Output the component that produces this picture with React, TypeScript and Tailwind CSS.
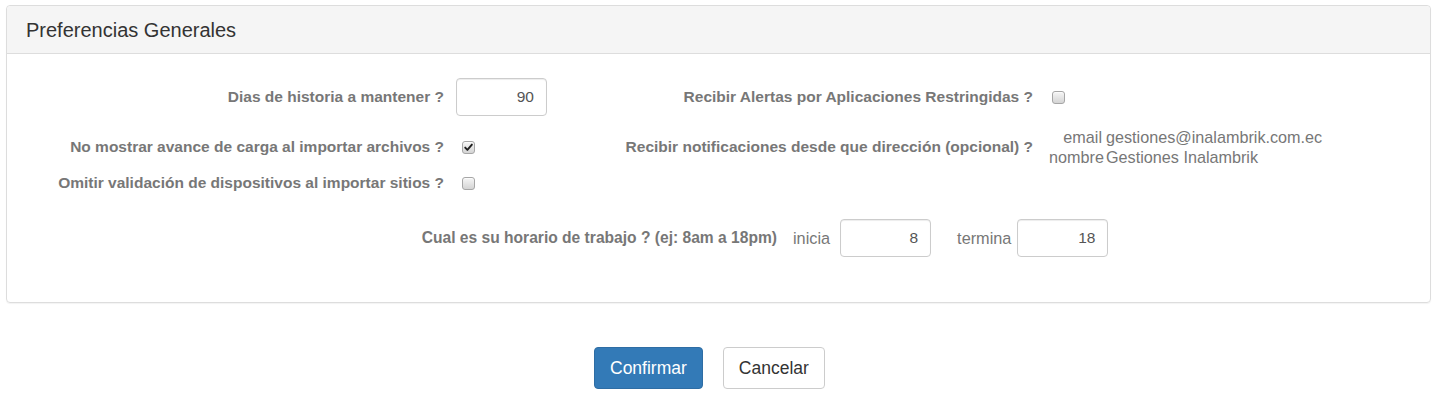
import { ReactElement } from "react"

function Checkbox({ checked = false }: { checked?: boolean }): ReactElement {
  return (
    <span className="inline-flex items-center justify-center w-[13px] h-[13px] rounded-[3px] border border-[#a6a6a6] bg-linear-to-b from-[#f6f6f6] to-[#d4d4d4] shadow-[inset_0_1px_0_rgba(255,255,255,0.6)]">
      {checked && (
        <svg width="11" height="11" viewBox="0 0 11 11">
          <path d="M2.2 5.6 L4.4 7.9 L8.9 2.6" fill="none" stroke="#1f1f1f" strokeWidth="1.9" strokeLinecap="round" strokeLinejoin="round" />
        </svg>
      )}
    </span>
  )
}

function NumberBox({ value }: { value: string }): ReactElement {
  return (
    <div className="flex items-center justify-end w-[91px] h-[38px] px-[12px] border border-[#ccc] rounded-[4px] shadow-[inset_0_1px_1px_rgba(0,0,0,0.075)] text-[15.5px] font-normal text-[#555]">
      {value}
    </div>
  )
}

export default function App(): ReactElement {
  return (
    <div className="min-h-screen bg-white pt-[5px] pl-[6px] pr-[11px] font-['Liberation_Sans',Arial,sans-serif]">
      <div className="border border-[#ddd] rounded-[4px] shadow-[0_1px_1px_rgba(0,0,0,0.05)]">
        <div className="flex items-center h-[48px] px-[19px] bg-[#f5f5f5] border-b border-[#ddd] rounded-t-[4px] text-[20px] text-[#333]">
          Preferencias Generales
        </div>

        <div className="pt-[24px] pb-[45px]">
          <div className="flex">
            {/* left column */}
            <div className="w-[593px] flex flex-col text-[15.5px] font-bold text-[#777] whitespace-nowrap">
              <div className="flex items-center h-[38px]">
                <div className="w-[437px] text-right">Dias de historia a mantener ?</div>
                <div className="ml-[12px]">
                  <NumberBox value="90" />
                </div>
              </div>
              <div className="flex items-center h-[20px] mt-[21px]">
                <div className="w-[437px] text-right">No mostrar avance de carga al importar archivos ?</div>
                <div className="ml-[18px] flex">
                  <Checkbox checked />
                </div>
              </div>
              <div className="flex items-center h-[20px] mt-[16px]">
                <div className="w-[437px] text-right">Omitir validación de dispositivos al importar sitios ?</div>
                <div className="ml-[18px] flex">
                  <Checkbox />
                </div>
              </div>
            </div>

            {/* right column */}
            <div className="flex-1 flex flex-col text-[15.5px] font-bold text-[#777] whitespace-nowrap">
              <div className="flex items-center h-[38px]">
                <div className="w-[433px] text-right">Recibir Alertas por Aplicaciones Restringidas ?</div>
                <div className="ml-[19px] flex">
                  <Checkbox />
                </div>
              </div>
              <div className="flex items-center h-[40px] mt-[11px]">
                <div className="w-[433px] text-right">Recibir notificaciones desde que dirección (opcional) ?</div>
                <div className="ml-[16px] grid grid-cols-[53px_auto] gap-x-[4px] text-[16.2px] leading-[20px] font-normal text-[#777]">
                  <span className="text-right">email</span>
                  <span>gestiones@inalambrik.com.ec</span>
                  <span className="text-right">nombre</span>
                  <span>Gestiones Inalambrik</span>
                </div>
              </div>
            </div>
          </div>

          <div className="flex items-center h-[38px] mt-[26px] text-[#777] whitespace-nowrap">
            <div className="w-[770px] text-right text-[15.6px] font-bold">
              Cual es su horario de trabajo ? (ej: 8am a 18pm)
            </div>
            <span className="ml-[16px] text-[16.3px]">inicia</span>
            <div className="ml-[10px]">
              <NumberBox value="8" />
            </div>
            <span className="ml-[26px] text-[16.3px]">termina</span>
            <div className="ml-[6px]">
              <NumberBox value="18" />
            </div>
          </div>
        </div>
      </div>

      <div className="flex gap-[20px] mt-[44px] ml-[588px]">
        <button className="h-[42px] px-[15px] rounded-[4px] bg-[#337ab7] border border-[#2e6da4] text-white text-[17.5px]">
          Confirmar
        </button>
        <button className="h-[42px] px-[15px] rounded-[4px] bg-white border border-[#ccc] text-[#333] text-[17.5px]">
          Cancelar
        </button>
      </div>
    </div>
  )
}
